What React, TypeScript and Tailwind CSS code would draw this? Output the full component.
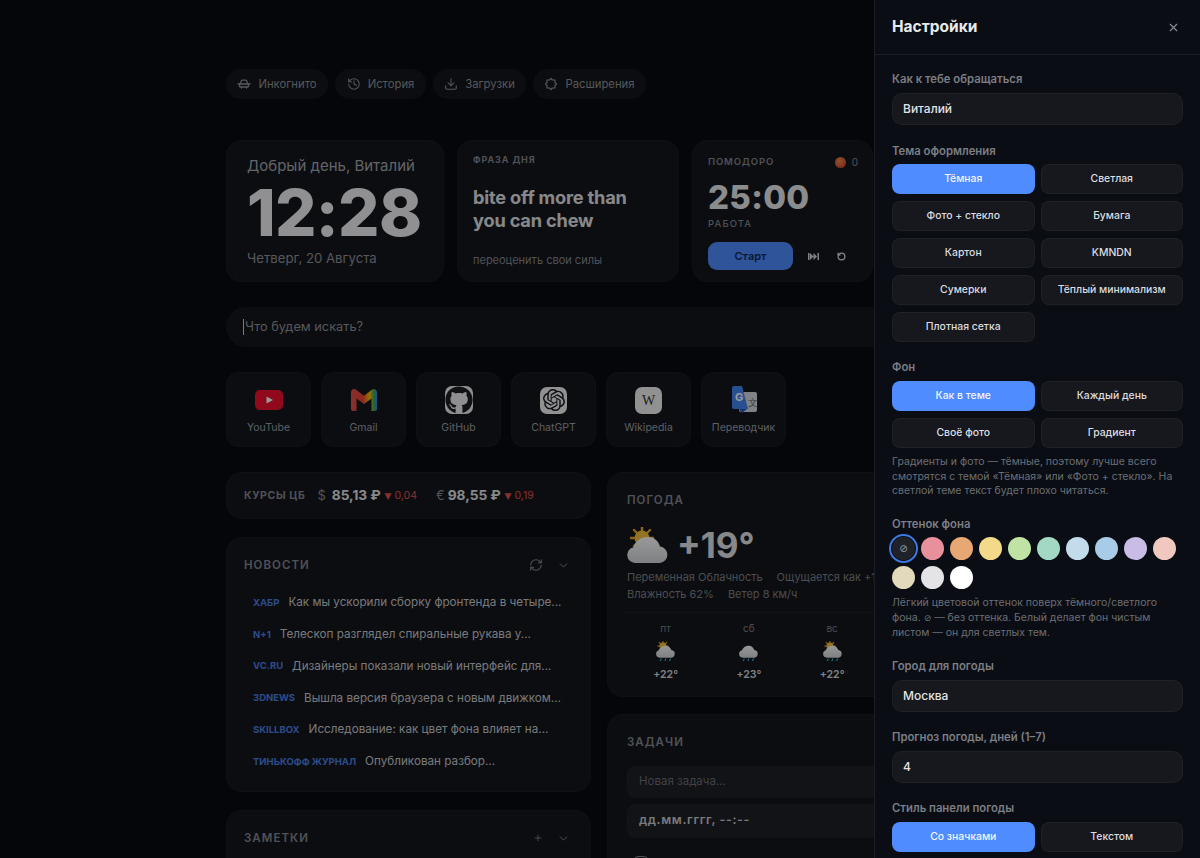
import { ChevronDown, Download, History, Plus, RefreshCw, RotateCcw, X } from "lucide-react";
import { FaGithub } from "react-icons/fa6";
import { SiOpenai } from "react-icons/si";

const pills = [
  { label: "Инкогнито", icon: <CarIcon />, width: "w-[102px]" },
  { label: "История", icon: <History size={14} strokeWidth={1.800} />, width: "w-[91px]" },
  { label: "Загрузки", icon: <Download size={14} strokeWidth={1.800} />, width: "w-[93px]" },
  { label: "Расширения", icon: <ExtensionIcon />, width: "w-[113px]" },
];

const news = [
  ["ХАБР", "Как мы ускорили сборку фронтенда в четыре..."],
  ["N+1", "Телескоп разглядел спиральные рукава у..."],
  ["VC.RU", "Дизайнеры показали новый интерфейс для..."],
  ["3DNEWS", "Вышла версия браузера с новым движком..."],
  ["SKILLBOX", "Исследование: как цвет фона влияет на..."],
  ["ТИНЬКОФФ ЖУРНАЛ", "Опубликован разбор..."],
];

const forecast = [
  { day: "пт", temp: "+22°", sun: true },
  { day: "сб", temp: "+23°", sun: false },
  { day: "вс", temp: "+22°", sun: true },
  { day: "пн", temp: "+21°", sun: true },
];

const swatches = [
  "bg-[#e8909c]",
  "bg-[#e8a873]",
  "bg-[#f3da8a]",
  "bg-[#c0e3a5]",
  "bg-[#a3d8c4]",
  "bg-[#c3dceb]",
  "bg-[#a8cbe8]",
  "bg-[#c9bde6]",
  "bg-[#f0c8c0]",
  "bg-[#e2d8bb]",
  "bg-[#e4e4e6]",
  "bg-white",
];

function CarIcon() {
  return (
    <svg width="14" height="14" viewBox="0 0 14 14" fill="none" stroke="currentColor" strokeWidth="1.300" strokeLinecap="round" strokeLinejoin="round">
      <path d="M3.200 6.800 4.300 4a1.300 1.300 0 0 1 1.200-.8h3a1.300 1.300 0 0 1 1.200.8l1.100 2.800" />
      <path d="M1 7h12" />
      <path d="M2.500 7v2.200a.8.8 0 0 0 .8.8h7.400a.8.8 0 0 0 .8-.8V7" />
      <path d="M4.500 10v1M9.500 10v1" />
    </svg>
  );
}

function ExtensionIcon() {
  return (
    <svg width="14" height="14" viewBox="0 0 14 14" fill="none" stroke="currentColor" strokeWidth="1.200" strokeLinejoin="round">
      <path d="M7 1.500 8.500 3H11v2.500L12.500 7 11 8.500V11H8.500L7 12.500 5.500 11H3V8.500L1.500 7 3 5.500V3h2.500z" />
    </svg>
  );
}

function YoutubeIcon() {
  return (
    <svg width="28" height="20" viewBox="0 0 28 20">
      <rect width="28" height="20" rx="5" fill="#f0112f" />
      <path d="M11.500 6.500 18 10l-6.500 3.500z" fill="#fff" />
    </svg>
  );
}

function GmailIcon() {
  return (
    <svg width="26" height="22" viewBox="0 0 26 22">
      <defs>
        <linearGradient id="gmail-m" x1="0" y1="0" x2="1" y2="0">
          <stop offset="0" stopColor="#e2504f" />
          <stop offset="0.45" stopColor="#ea4335" />
          <stop offset="0.72" stopColor="#fbbc04" />
          <stop offset="0.88" stopColor="#34a853" />
          <stop offset="1" stopColor="#3b82f6" />
        </linearGradient>
      </defs>
      <path d="M0 3.500C0 .5 3 -.8 5.200 .8L13 6.800 20.800 .8C23 -.8 26 .5 26 3.500V20a2 2 0 0 1-2 2h-3.500V9.500L13 15 5.500 9.500V22H2a2 2 0 0 1-2-2z" fill="url(#gmail-m)" />
    </svg>
  );
}

function TranslateIcon() {
  return (
    <svg width="28" height="28" viewBox="0 0 28 28">
      <rect x="9" y="6" width="18" height="20" rx="2" fill="#d5d9dd" />
      <path d="M9 23l3 4 5-4z" fill="#2a56c6" />
      <path d="M2 2a2 2 0 0 1 2-2h8l6 23H4a2 2 0 0 1-2-2z" fill="#4285f4" />
      <text x="5" y="15" fontSize="11" fontWeight="700" fill="#fff" fontFamily="Inter, sans-serif">G</text>
      <text x="18" y="20" fontSize="10" fill="#5f6368" fontFamily="Inter, sans-serif">文</text>
    </svg>
  );
}

function WeatherIcon({ width, rain = false, sun = true, id }: { width: number; rain?: boolean; sun?: boolean; id: string }) {
  const viewHeight = rain ? 44 : 36;
  return (
    <svg width={width} height={(width * viewHeight) / 41} viewBox={`0 0 41 ${viewHeight}`}>
      <defs>
        <linearGradient id={id} x1="0" y1="0" x2="0" y2="1">
          <stop offset="0" stopColor="#ffffff" />
          <stop offset="1" stopColor="#d4d6da" />
        </linearGradient>
      </defs>
      {sun && (
        <g>
          <path
            d="M15 0v5M15 18v4M4 11h4M22 11h4M7 3l3 3M23 3l-3 3M7 19l3-3M23 19l-3-3"
            stroke="#eea92a"
            strokeWidth="2.400"
            strokeLinecap="round"
          />
          <circle cx="15" cy="11" r="7.500" fill="#f6c13c" />
        </g>
      )}
      <path
        d="M8 36a8 8 0 0 1-1.500-15.800C8 15 13 10 21 10c6 0 10.500 4 12 9.500a8.300 8.300 0 0 1 0 16.500z"
        fill={`url(#${id})`}
      />
      {rain && (
        <path
          d="M11 38.500l-1.500 4M21 38.500l-1.500 4M31 38.500l-1.500 4"
          stroke="#3fb6c9"
          strokeWidth="2.400"
          strokeLinecap="round"
        />
      )}
    </svg>
  );
}

function Tile({ label, children }: { label: string; children: React.ReactNode }) {
  return (
    <div className="flex h-[75px] w-[85px] flex-col items-center rounded-[13px] border border-white/[0.02] bg-[#14171c]">
      <div className="mt-[13px] flex h-[28px] w-full items-center justify-center">{children}</div>
      <div className="mt-[6px] text-[10.500px] leading-4 text-[#9c9fa5]">{label}</div>
    </div>
  );
}

function Card({ className, children }: { className: string; children: React.ReactNode }) {
  return (
    <div className={`rounded-[16px] border border-white/[0.02] bg-[#14171c] ${className}`}>{children}</div>
  );
}

function PanelTitle({ children }: { children: React.ReactNode }) {
  return <div className="text-[11.500px] font-semibold uppercase leading-4 tracking-[0.09em] text-[#858890]">{children}</div>;
}

function Label({ children, className = "" }: { children: React.ReactNode; className?: string }) {
  return <div className={`text-[11.300px] font-semibold leading-4 text-[#7b7e85] ${className}`}>{children}</div>;
}

function Field({ value }: { value: string }) {
  return (
    <div className="flex h-[32px] items-center rounded-[10px] border border-white/[0.04] bg-[#16181d] px-[10px] text-[12px] font-medium text-[#e2e3e6]">
      {value}
    </div>
  );
}

function OptionButton({ label, active = false }: { label: string; active?: boolean }) {
  return (
    <div
      className={`flex h-[30px] items-center justify-center rounded-[8px] text-[10.400px] font-medium ${
        active ? "bg-[#4f8cff] text-[#f2f5fb]" : "border border-white/[0.04] bg-[#16181d] text-[#dcdde0]"
      }`}
    >
      {label}
    </div>
  );
}

function Hint({ children, className = "" }: { children: React.ReactNode; className?: string }) {
  return <div className={`text-[10.500px] leading-[14.700px] text-[#6c6f76] ${className}`}>{children}</div>;
}

function NoTint({ className }: { className: string }) {
  return <span className={`font-['DejaVu_Sans',sans-serif] leading-none ${className}`}>⊘</span>;
}

function SettingsPanel() {
  return (
    <aside className="absolute right-0 top-0 bottom-0 w-[326px] overflow-hidden border-l border-white/[0.07] bg-[#0a0d13]">
      <div className="flex h-[55px] items-center justify-between border-b border-white/[0.07] pl-[17px] pr-[20px]">
        <div className="text-[15.500px] font-bold text-[#e8eaec]">Настройки</div>
        <X size={13} strokeWidth={2} className="text-[#8d9097]" />
      </div>
      <div className="px-[17px] pt-[16px]">
        <Label className="mb-[6px]">Как к тебе обращаться</Label>
        <Field value="Виталий" />

        <Label className="mb-[5px] mt-[18px]">Тема оформления</Label>
        <div className="grid grid-cols-2 gap-x-[6px] gap-y-[7px]">
          <OptionButton label="Тёмная" active />
          <OptionButton label="Светлая" />
          <OptionButton label="Фото + стекло" />
          <OptionButton label="Бумага" />
          <OptionButton label="Картон" />
          <OptionButton label="KMNDN" />
          <OptionButton label="Сумерки" />
          <OptionButton label="Тёплый минимализм" />
          <OptionButton label="Плотная сетка" />
        </div>

        <Label className="mb-[6px] mt-[17px]">Фон</Label>
        <div className="grid grid-cols-2 gap-x-[6px] gap-y-[7px]">
          <OptionButton label="Как в теме" active />
          <OptionButton label="Каждый день" />
          <OptionButton label="Своё фото" />
          <OptionButton label="Градиент" />
        </div>
        <Hint className="mt-[7px]">
          Градиенты и фото — тёмные, поэтому лучше всего смотрятся с темой «Тёмная» или «Фото + стекло». На светлой теме
          текст будет плохо читаться.
        </Hint>

        <Label className="mb-[5px] mt-[17px]">Оттенок фона</Label>
        <div className="flex flex-wrap gap-[6px]">
          <div className="flex h-[23px] w-[23px] items-center justify-center rounded-full bg-[#1f2228] text-[#9a9da3] outline-2 outline-offset-1 outline-[#3f78e0]">
            <NoTint className="text-[10px]" />
          </div>
          {swatches.map((color) => (
            <div key={color} className={`h-[23px] w-[23px] rounded-full ${color}`} />
          ))}
        </div>
        <Hint className="mt-[7px]">
          Лёгкий цветовой оттенок поверх тёмного/светлого фона. <NoTint className="text-[9px]" /> — без оттенка. Белый
          делает фон чистым листом — он для светлых тем.
        </Hint>

        <Label className="mb-[6px] mt-[18px]">Город для погоды</Label>
        <Field value="Москва" />

        <Label className="mb-[6px] mt-[17px]">Прогноз погоды, дней (1–7)</Label>
        <Field value="4" />

        <Label className="mb-[6px] mt-[17px]">Стиль панели погоды</Label>
        <div className="grid grid-cols-2 gap-x-[6px]">
          <OptionButton label="Со значками" active />
          <OptionButton label="Текстом" />
        </div>
      </div>
    </aside>
  );
}

export default function App() {
  return (
    <div className="relative h-[858px] w-full overflow-hidden bg-[#080b12] font-['Inter',sans-serif]">
      <main className="mx-auto w-[748px] pt-[69px]">
        <div className="flex gap-[7px]">
          {pills.map((pill) => (
            <div
              key={pill.label}
              className={`flex h-[30px] items-center justify-center gap-[7px] rounded-full bg-[#14171c] text-[11.300px] text-[#8f9298] ${pill.width}`}
            >
              {pill.icon}
              {pill.label}
            </div>
          ))}
        </div>

        <div className="mt-[41px] flex gap-[13px]">
          <Card className="h-[142px] w-[218px] px-[20px] pt-[15px]">
            <div className="text-[15px] leading-5 text-[#a4a7ac]">Добрый день, Виталий</div>
            <div className="text-[65px] font-extrabold leading-[74px] tracking-[-0.01em] text-[#f0f1f3]">12:28</div>
            <div className="text-[13.200px] leading-4 text-[#909399]">Четверг, 20 Августа</div>
          </Card>
          <Card className="flex h-[142px] w-[222px] flex-col px-[15px] pt-[13px]">
            <div className="text-[9px] font-bold uppercase leading-3 tracking-[0.1em] text-[#858890]">Фраза дня</div>
            <div className="mt-[20px] text-[18.200px] font-bold leading-[23px] tracking-[-0.01em] text-[#e2e3e6]">
              bite off more than
              <br />
              you can chew
            </div>
            <div className="mb-[13px] mt-auto text-[11px] leading-4 text-[#858890]">переоценить свои силы</div>
          </Card>
          <Card className="h-[142px] w-[181px] pl-[15px] pr-[14px] pt-[14px]">
            <div className="flex items-center justify-between">
              <div className="text-[9.500px] font-semibold uppercase tracking-[0.09em] text-[#858890]">Помодоро</div>
              <div className="flex items-center gap-[6px] text-[10px] text-[#858890]">
                <span className="h-[11px] w-[11px] rounded-full bg-[radial-gradient(circle_at_40%_35%,#f08a4b,#c9361f)]" />0
              </div>
            </div>
            <div className="mt-[6px] text-[33px] font-extrabold leading-[42px] tracking-[0.01em] text-[#e8e9ec]">25:00</div>
            <div className="text-[9.500px] font-medium uppercase leading-3 tracking-[0.12em] text-[#858890]">Работа</div>
            <div className="mt-[12px] flex items-center gap-[6px]">
              <div className="flex h-[28px] w-[85px] items-center justify-center rounded-[9px] bg-[#4f8cff] text-[11px] font-semibold text-[#0e2a5c]">
                Старт
              </div>
              <div className="flex h-[28px] w-[28px] items-center justify-center rounded-[8px] text-[#d8dade]">
                <svg width="11" height="7" viewBox="0 0 11 7" fill="currentColor">
                  <path d="M0 0h1.500v7H0zM9.500 0H11v7H9.500zM2 0l3.500 3.500L2 7zM5.500 0 9 3.500 5.500 7z" />
                </svg>
              </div>
              <div className="-ml-[4px] flex h-[28px] w-[24px] items-center justify-center rounded-[8px] text-[#d8dade]">
                <RotateCcw size={9} strokeWidth={3.500} />
              </div>
            </div>
          </Card>
        </div>

        <div className="mt-[25px] flex h-[40px] items-center rounded-[20px] bg-[#14171c] pl-[17px] text-[12.800px] text-[#8f9298]">
          <span className="mr-[1px] h-[16px] w-px bg-[#c9cbd0]" />
          Что будем искать?
        </div>

        <div className="mt-[25px] flex gap-[10px]">
          <Tile label="YouTube">
            <YoutubeIcon />
          </Tile>
          <Tile label="Gmail">
            <GmailIcon />
          </Tile>
          <Tile label="GitHub">
            <div className="flex h-[28px] w-[28px] items-center justify-center rounded-[7px] bg-[#eeeeee] text-[#1b1f24]">
              <FaGithub size={28} />
            </div>
          </Tile>
          <Tile label="ChatGPT">
            <div className="flex h-[27px] w-[27px] items-center justify-center rounded-[7px] bg-[#f2f2f2] text-[#15181e]">
              <SiOpenai size={22} />
            </div>
          </Tile>
          <Tile label="Wikipedia">
            <div className="flex h-[27px] w-[27px] items-center justify-center rounded-[7px] bg-[#f2f2f2] font-['Liberation_Serif',serif] text-[14px] text-[#333]">
              W
            </div>
          </Tile>
          <Tile label="Переводчик">
            <TranslateIcon />
          </Tile>
        </div>

        <div className="mt-[25px] grid grid-cols-[365px_367px] gap-x-[16px]">
          <div className="flex flex-col gap-[18px]">
            <Card className="flex h-[47px] items-center px-[17px]">
              <div className="text-[10.500px] font-bold uppercase tracking-[0.06em] text-[#858890]">Курсы ЦБ</div>
              <div className="ml-[12px] text-[13px] text-[#858890]">$</div>
              <div className="ml-[6px] text-[13.700px] font-bold text-[#e2e3e6]">85,13 ₽</div>
              <div className="ml-[4px] text-[10.500px] text-[#e05252]">
                <span className="font-['DejaVu_Sans',sans-serif] text-[9px]">▼</span> 0,04
              </div>
              <div className="ml-[19px] text-[13px] text-[#858890]">€</div>
              <div className="ml-[3px] text-[13.700px] font-bold text-[#e2e3e6]">98,55 ₽</div>
              <div className="ml-[4px] text-[10.500px] text-[#e05252]">
                <span className="font-['DejaVu_Sans',sans-serif] text-[9px]">▼</span> 0,19
              </div>
            </Card>

            <Card className="h-[255px] pl-[17px] pr-[20px] pt-[19px]">
              <div className="flex items-center justify-between">
                <PanelTitle>Новости</PanelTitle>
                <div className="flex items-center gap-[14px] text-[#858890]">
                  <RefreshCw size={14} strokeWidth={1.800} />
                  <ChevronDown size={13} strokeWidth={1.800} />
                </div>
              </div>
              <div className="mt-[14px] flex flex-col pl-[9px]">
                {news.map(([source, title]) => (
                  <div key={source} className="flex h-[31.800px] items-center gap-[9px] whitespace-nowrap">
                    <span className="text-[9.500px] font-bold text-[#4a7fe0]">{source}</span>
                    <span className="text-[11.700px] text-[#c8cace]">{title}</span>
                  </div>
                ))}
              </div>
            </Card>

            <Card className="h-[100px] pl-[17px] pr-[20px] pt-[19px]">
              <div className="flex items-center justify-between">
                <PanelTitle>Заметки</PanelTitle>
                <div className="flex items-center gap-[14px] text-[#858890]">
                  <Plus size={10} strokeWidth={2} />
                  <ChevronDown size={13} strokeWidth={1.800} />
                </div>
              </div>
            </Card>
          </div>

          <div className="flex flex-col gap-[17px]">
            <Card className="h-[225px] px-[19px] pt-[19px]">
              <PanelTitle>Погода</PanelTitle>
              <div className="mt-[15px] flex items-center gap-[9px]">
                <WeatherIcon width={41} id="cloud-now" />
                <div className="text-[35px] font-bold leading-[44px] text-[#e2e3e6]">+19°</div>
              </div>
              <div className="mt-[2px] flex gap-[14px] whitespace-nowrap text-[11px] leading-[17px] text-[#7d8087]">
                <span>Переменная Облачность</span>
                <span>Ощущается как +19°</span>
              </div>
              <div className="flex gap-[14px] text-[11px] leading-[17px] text-[#7d8087]">
                <span>Влажность 62%</span>
                <span>Ветер 8 км/ч</span>
              </div>
              <div className="-mx-[3px] mt-[9px] grid grid-cols-4 border-t border-white/[0.03] pt-[7px]">
                {forecast.map((item) => (
                  <div key={item.day} className="flex flex-col items-center">
                    <div className="text-[10px] leading-4 text-[#7d8087]">{item.day}</div>
                    <div className="mt-[5px]">
                      <WeatherIcon width={19} rain sun={item.sun} id={`cloud-${item.day}`} />
                    </div>
                    <div className="mt-[6px] text-[10.500px] font-semibold text-[#d8dade]">{item.temp}</div>
                  </div>
                ))}
              </div>
            </Card>

            <Card className="h-[180px] px-[19px] pt-[19px]">
              <div className="flex items-center justify-between">
                <PanelTitle>Задачи</PanelTitle>
                <div className="text-[11px] text-[#858890]">3 из 5</div>
              </div>
              <div className="mt-[15px] flex h-[32px] items-center rounded-[8px] bg-[#1d2026] px-[12px] text-[11.500px] text-[#6c6f76]">
                Новая задача...
              </div>
              <div className="mt-[6px] flex h-[34px] items-center rounded-[8px] bg-[#1d2026] px-[12px] text-[12.500px] font-semibold tracking-[0.05em] text-[#c8cace]">
                дд.мм.гггг, --:--
              </div>
              <div className="ml-[7px] mt-[18px] h-[14px] w-[14px] rounded-[4px] border border-[#858890]" />
            </Card>
          </div>
        </div>
      </main>

      <div className="absolute inset-0 bg-black/40 backdrop-blur-[0.4px]" />
      <SettingsPanel />
    </div>
  );
}
